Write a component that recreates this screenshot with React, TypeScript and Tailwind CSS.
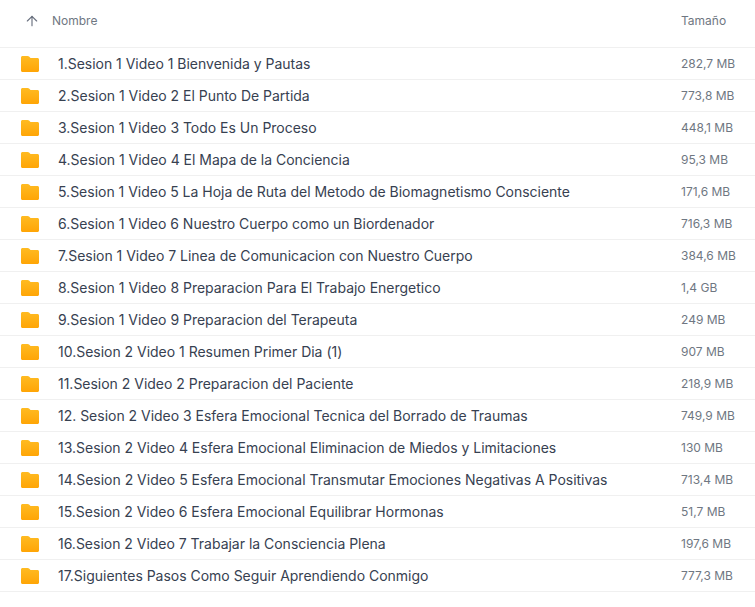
import { ArrowUp } from 'lucide-react'

const ROWS = [
  { name: '1.Sesion 1 Video 1 Bienvenida y Pautas', size: '282,7 MB' },
  { name: '2.Sesion 1 Video 2 El Punto De Partida', size: '773,8 MB' },
  { name: '3.Sesion 1 Video 3 Todo Es Un Proceso', size: '448,1 MB' },
  { name: '4.Sesion 1 Video 4 El Mapa de la Conciencia', size: '95,3 MB' },
  { name: '5.Sesion 1 Video 5 La Hoja de Ruta del Metodo de Biomagnetismo Consciente', size: '171,6 MB' },
  { name: '6.Sesion 1 Video 6 Nuestro Cuerpo como un Biordenador', size: '716,3 MB' },
  { name: '7.Sesion 1 Video 7 Linea de Comunicacion con Nuestro Cuerpo', size: '384,6 MB' },
  { name: '8.Sesion 1 Video 8 Preparacion Para El Trabajo Energetico', size: '1,4 GB' },
  { name: '9.Sesion 1 Video 9 Preparacion del Terapeuta', size: '249 MB' },
  { name: '10.Sesion 2 Video 1 Resumen Primer Dia (1)', size: '907 MB' },
  { name: '11.Sesion 2 Video 2 Preparacion del Paciente', size: '218,9 MB' },
  { name: '12. Sesion 2 Video 3 Esfera Emocional Tecnica del Borrado de Traumas', size: '749,9 MB' },
  { name: '13.Sesion 2 Video 4 Esfera Emocional Eliminacion de Miedos y Limitaciones', size: '130 MB' },
  { name: '14.Sesion 2 Video 5 Esfera Emocional Transmutar Emociones Negativas A Positivas', size: '713,4 MB' },
  { name: '15.Sesion 2 Video 6 Esfera Emocional Equilibrar Hormonas', size: '51,7 MB' },
  { name: '16.Sesion 2 Video 7 Trabajar la Consciencia Plena', size: '197,6 MB' },
  { name: '17.Siguientes Pasos Como Seguir Aprendiendo Conmigo', size: '777,3 MB' },
]

function FolderIcon() {
  return (
    <svg width="18" height="16" viewBox="0 0 18 16" className="shrink-0">
      <defs>
        <linearGradient id="folder-fill" x1="0" y1="0" x2="0" y2="1">
          <stop offset="0" stopColor="#ffbb22" />
          <stop offset="1" stopColor="#ffa506" />
        </linearGradient>
      </defs>
      <path
        d="M1.5 0H6.6C7.2 0 7.7.2 8.1.6L9.5 2H16.5C17.3 2 18 2.7 18 3.5V14.5C18 15.3 17.3 16 16.5 16H1.5C.7 16 0 15.3 0 14.5V1.5C0 .7.7 0 1.5 0Z"
        fill="url(#folder-fill)"
      />
    </svg>
  )
}

export default function App() {
  return (
    <div className="w-[755px] h-[607px] overflow-hidden bg-white font-['Inter',sans-serif]">

      {/* Header */}
      <div className="h-12 flex border-b border-[#f0f0f0] pb-[5px] items-center text-xs text-[#6f7782]">
        <ArrowUp size={16} strokeWidth={1.75} className="ml-6 text-[#6b7280]" />
        <span className="ml-3">Nombre</span>
        <span className="ml-auto w-[74px]">Tamaño</span>
      </div>

      {/* Rows */}
      {ROWS.map(row => (
        <div key={row.name} className="h-8 flex items-center border-b border-[#f0f0f0]">
          <div className="ml-[21px] w-[37px]">
            <FolderIcon />
          </div>
          <span className="text-[14px] tracking-[-0.015px] text-[#374151] whitespace-nowrap">{row.name}</span>
          <span className="ml-auto w-[74px] text-xs text-[#6f7782]">{row.size}</span>
        </div>
      ))}
    </div>
  )
}
